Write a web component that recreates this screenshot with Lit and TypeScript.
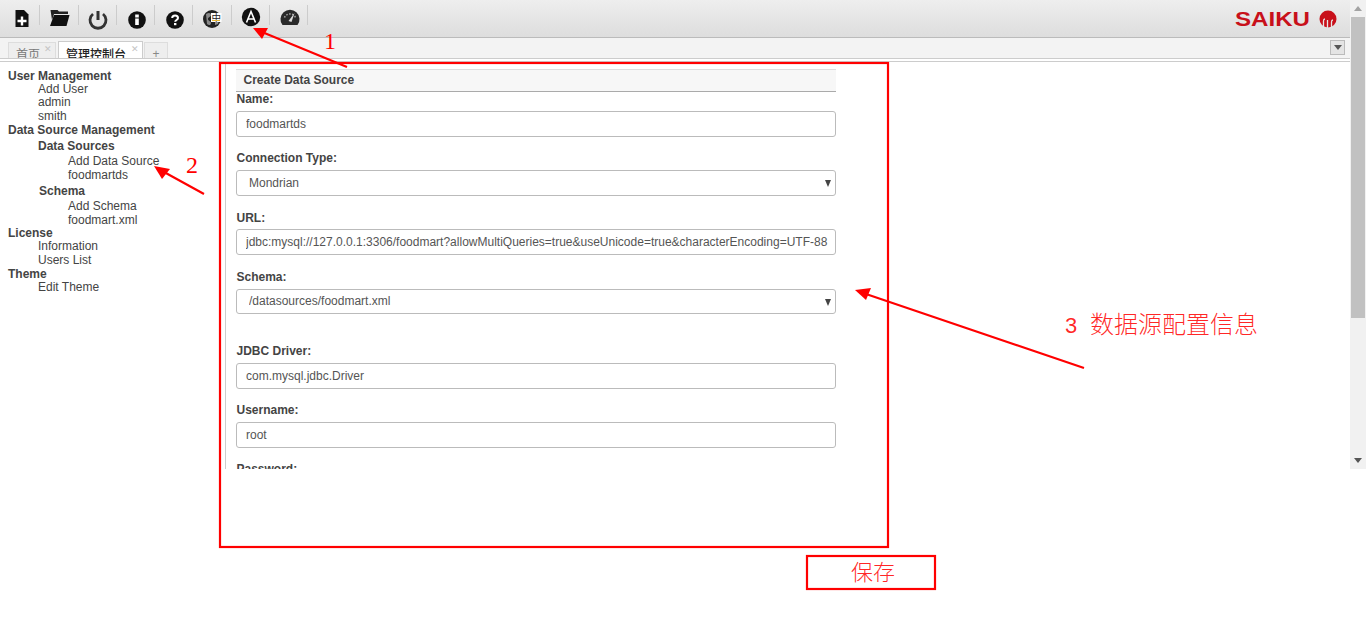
import { LitElement, html, css, svg } from "lit";
import { customElement } from "lit/decorators.js";

const icons = [
  svg`<path d="M13.500 10H22l4.500 4.500V27H13.500z" fill="#111"/><path d="M15.500 21h9M20 16.500v9" stroke="#fff" stroke-width="2.400"/>`,
  svg`<path d="M10.500 10h7l1.500 1.500h9v2.500H14L12 20z" fill="#222"/><path d="M14 15h15.500l-3 11H10z" fill="#111"/>`,
  svg`<path d="M15 14a8 8 0 1 0 10 0" fill="none" stroke="#333" stroke-width="2.800"/><path d="M20 11v9" stroke="#333" stroke-width="3"/>`,
  svg`<circle cx="20" cy="20" r="8.800" fill="#111"/><rect x="18.200" y="18.500" width="3.600" height="6.500" fill="#fff"/><rect x="18.200" y="14.500" width="3.600" height="3" fill="#fff"/>`,
  svg`<circle cx="20" cy="20" r="8.800" fill="#111"/><path d="M17.200 18c0-3.400 5.800-3.400 5.800 0 0 2-2.800 2-2.800 3.800" fill="none" stroke="#fff" stroke-width="2"/><rect x="19" y="23" width="2.400" height="2.200" fill="#fff"/>`,
  svg`<circle cx="19" cy="19" r="9" fill="#222"/><path d="M13 14c3-2 5-1 5 1s-3 2-3 4 3 2 3 4-2 3-4 1zM22 21l4-1-1 4-3 1z" fill="#888"/><rect x="18" y="13" width="10.500" height="9" fill="#fff"/><text x="23.200" y="21" font-size="9.500" text-anchor="middle" fill="#222" font-family="Noto Sans CJK SC">中</text><path d="M19 20.500h8" stroke="#e8b93a"/>`,
  svg`<circle cx="20" cy="17" r="9.200" fill="#111"/><path d="M15.500 22.500l4.500-11 4.500 11M17 19h6" fill="none" stroke="#fff" stroke-width="1.600"/>`,
  svg`<path d="M12.500 25a9.500 9.500 0 1 1 15 0z" fill="#2a2a2a"/><path d="M14.500 17.500a6 6 0 0 1 11 0" fill="none" stroke="#aaa" stroke-width="1.500" stroke-dasharray="1.500 1.500"/><path d="M18.500 21l6-8-3 9z" fill="#ddd"/>`,
];

@customElement("app-root")
export class AppRoot extends LitElement {
  static styles = css`
    :host { display: block; position: relative; width: 1366px; height: 625px; overflow: hidden; background: #fff; font-family: "Liberation Sans", Arial, sans-serif; font-size: 12px; color: #333; }
    .app { display: flex; height: 469px; }
    .main { flex: 1; min-width: 0; display: flex; flex-direction: column; }
    .toolbar { height: 37px; flex: none; display: flex; align-items: flex-start; justify-content: space-between; background: linear-gradient(#eeeeee, #dddddd); border-bottom: 1px solid #bbb; padding-left: 2px; }
    .tools { display: flex; padding-top: 5px; }
    .tool { width: 38.300px; height: 20px; box-sizing: border-box; border-right: 1px solid #ccc; display: flex; justify-content: center; }
    .tool svg { width: 40px; height: 40px; margin-top: -5px; flex: none; }
    .logo { width: 120px; height: 36px; flex: none; }
    .tabbar { height: 21px; flex: none; box-sizing: border-box; display: flex; align-items: flex-end; background: #f3f3f3; border-bottom: 1px solid #ccc; padding: 0 5px 0 8px; }
    .tab { flex: none; width: 48px; height: 16px; box-sizing: border-box; border: 1px solid #ddd; border-bottom: none; background: #eee; margin-right: 2px; padding-left: 7px; display: flex; gap: 4px; color: #777; line-height: 22px; font-family: "Noto Sans CJK SC", sans-serif; white-space: nowrap; overflow: hidden; }
    .tab.on { width: 85px; height: 17px; background: #fff; color: #222; font-weight: 500; gap: 5px; line-height: 24px; border-color: #ccc; }
    .tab b { font-weight: bold; color: #c4c4c4; font-size: 9px; font-family: "DejaVu Sans", sans-serif; line-height: 13px; }
    .tab.on b { line-height: 15px; }
    .tab.plus { width: 24px; padding: 0; justify-content: center; color: #888; font-family: "Liberation Sans", sans-serif; line-height: 22px; margin-left: -1px; }
    .drop { width: 15px; height: 15px; box-sizing: border-box; border: 1px solid #bbb; background: #e4e4e4; margin-left: auto; margin-bottom: 3px; display: flex; align-items: center; justify-content: center; }
    .drop i, .sb i { width: 0; height: 0; border-left: 4px solid transparent; border-right: 4px solid transparent; border-top: 5px solid #555; }
    .content { flex: 1; min-height: 0; display: flex; border-top: 1px solid #ccc; margin-top: 2px; overflow: hidden; }
    .side { width: 226px; flex: none; box-sizing: border-box; border-right: 1px solid #ccc; padding: 7px 0 0 8px; color: #444; line-height: 13.500px; }
    .side .h { font-weight: bold; color: #444; padding-top: 1px; margin-bottom: -1px; }
    .side .h.lic { margin-top: -1px; margin-bottom: -2px; }
    .side .h.last { margin-bottom: 0; }
    .l1 { padding-left: 30px; }
    .l1.wide { line-height: 14px; }
    .l2 { padding-left: 30px; line-height: 14px; }
    .sh { font-weight: bold; color: #444; padding: 3.500px 0 0.500px; }
    .sh.sc { padding: 3px 0 0.500px 1px; }
    .form { width: 600px; margin-left: 10px; padding-top: 7px; }
    .title { height: 23px; box-sizing: border-box; background: #f7f7f7; border-top: 1px solid #ddd; border-bottom: 1px solid #aaa; padding-left: 7.500px; font-weight: bold; line-height: 21px; color: #444; }
    .field { height: 59px; }
    .field.gap { margin-top: 16px; }
    label { display: block; font-weight: bold; line-height: 14px; margin-bottom: 5px; padding-left: 0.500px; color: #444; }
    label.lo { padding-top: 1px; margin-bottom: 4px; }
    label.lo2 { padding-top: 1px; }
    .ctl { position: relative; }
    input, select { width: 600px; height: 26px; box-sizing: border-box; border: 1px solid #bbb; border-radius: 3px; background: #fff; font: 12px "Liberation Sans", Arial, sans-serif; color: #555; padding: 0 0 0 9px; outline: none; display: block; appearance: none; margin: 0; }
    select { padding-left: 12px; }
    select.short { height: 25px; padding-bottom: 2px; }
    .ctl.sel::after { content: ""; position: absolute; right: 5px; top: 10px; border-left: 3.500px solid transparent; border-right: 3.500px solid transparent; border-top: 7px solid #444; }
    .sb { width: 16px; flex: none; background: #f1f1f1; display: flex; flex-direction: column; align-items: center; }
    .sb .up { width: 0; height: 0; margin-top: 6px; border-left: 4px solid transparent; border-right: 4px solid transparent; border-bottom: 5px solid #a3a3a3; }
    .sb .th { width: 14px; height: 301px; background: #c1c1c1; margin-top: 6px; }
    .sb i { margin-top: auto; margin-bottom: 6px; }
    .notes { position: absolute; left: 0; top: 0; width: 1366px; height: 625px; pointer-events: none; }
    .notes text { fill: #f00; font-family: "Liberation Serif", "Noto Sans CJK SC", serif; }
    .notes .cjk { font-family: "Noto Sans CJK SC", serif; font-weight: 300; fill-opacity: 0.85; }
    .notes .num { font-family: "Liberation Sans", sans-serif; fill-opacity: 0.85; }
  `;

  private field(name: string, value: string, labelClass = "", gap = false) {
    return html`<div class="field ${gap ? "gap" : ""}"><label class=${labelClass}>${name}</label><div class="ctl"><input readonly .value=${value} /></div></div>`;
  }
  private select(name: string, value: string, short = false) {
    return html`<div class="field"><label class=${short ? "lo2" : ""}>${name}</label><div class="ctl sel"><select class=${short ? "short" : ""}><option>${value}</option></select></div></div>`;
  }

  render() {
    return html`
      <div class="app">
        <div class="main">
          <div class="toolbar">
            <div class="tools">
              ${icons.map((i) => html`<div class="tool"><svg viewBox="-1 0 40 40">${i}</svg></div>`)}
            </div>
            <svg class="logo" viewBox="0 0 120 36">
              <text x="5" y="26" font-family="Liberation Sans" font-weight="bold" font-size="21" fill="#c8101a" textLength="75" lengthAdjust="spacingAndGlyphs">SAIKU</text>
              <circle cx="98" cy="19" r="8.500" fill="#c8101a"/>
              <path d="M93.500 28v-7q0-2 1.500-2M97.500 28v-8M101.500 28v-6q0-2 1.500-2" fill="none" stroke="#e6e6e6" stroke-width="1.300"/>
            </svg>
          </div>
          <div class="tabbar">
            <div class="tab">首页<b>✕</b></div>
            <div class="tab on">管理控制台<b>✕</b></div>
            <div class="tab plus">+</div>
            <div class="drop"><i></i></div>
          </div>
          <div class="content">
            <div class="side">
              <div class="h">User Management</div>
              <div class="l1"><div>Add User</div><div>admin</div><div>smith</div></div>
              <div class="h">Data Source Management</div>
              <div class="l1">
                <div class="sh">Data Sources</div>
                <div class="l2"><div>Add Data Source</div><div>foodmartds</div></div>
                <div class="sh sc">Schema</div>
                <div class="l2"><div>Add Schema</div><div>foodmart.xml</div></div>
              </div>
              <div class="h lic">License</div>
              <div class="l1 wide"><div>Information</div><div>Users List</div></div>
              <div class="h last">Theme</div>
              <div class="l1"><div>Edit Theme</div></div>
            </div>
            <div class="form">
              <div class="title">Create Data Source</div>
              ${this.field("Name:", "foodmartds")}
              ${this.select("Connection Type:", "Mondrian")}
              ${this.field("URL:", "jdbc:mysql://127.0.0.1:3306/foodmart?allowMultiQueries=true&useUnicode=true&characterEncoding=UTF-88", "lo")}
              ${this.select("Schema:", "/datasources/foodmart.xml", true)}
              ${this.field("JDBC Driver:", "com.mysql.jdbc.Driver", "", true)}
              ${this.field("Username:", "root")}
              ${this.field("Password:", "")}
            </div>
          </div>
        </div>
        <div class="sb"><div class="up"></div><div class="th"></div><i></i></div>
      </div>
      <svg class="notes" viewBox="0 0 1366 625">
        <g fill="none" stroke="#f00" stroke-width="2.200">
          <rect x="220" y="63" width="668" height="484"/>
          <rect x="807" y="556" width="128" height="33"/>
          <path d="M347 67L262 32M204 194L164 172M1084 368L866 294"/>
        </g>
        <g fill="#f00">
          <path d="M253 28L268 28L262 39z"/>
          <path d="M154 166L170 169L162 179z"/>
          <path d="M855 290L871 288L866 300z"/>
        </g>
        <text x="324" y="49" font-size="24">1</text>
        <text x="186" y="173" font-size="24">2</text>
        <text class="num" x="1065" y="333" font-size="22">3</text>
        <text class="cjk" x="1090" y="333" font-size="24">数据源配置信息</text>
        <text class="cjk" x="851" y="580" font-size="22">保存</text>
      </svg>
    `;
  }
}
